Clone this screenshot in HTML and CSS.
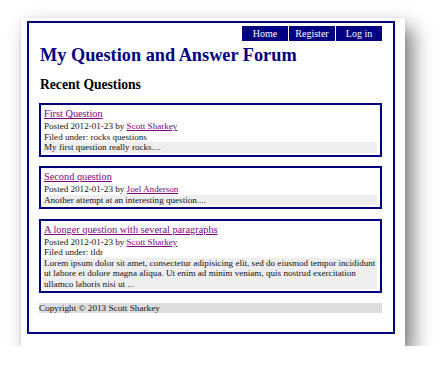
FILE: index.html
```html
<!DOCTYPE html>
<html lang="en">
<head>
  <meta charset="UTF-8">
  <title>My Question and Answer Forum</title>
  <link rel="stylesheet" href="styles.css">
</head>
<body>

  <!-- page sheet with shadow -->
  <div class="sheet">
    <div class="page">

      <!-- top navigation -->
      <ul class="nav">
        <li><a href="#">Home</a></li>
        <li><a href="#">Register</a></li>
        <li><a href="#">Log in</a></li>
      </ul>

      <h1>My Question and Answer Forum</h1>
      <h2>Recent Questions</h2>

      <div class="question">
        <a class="q-title" href="#">First Question</a>
        <div class="meta">Posted 2012-01-23 by <a href="#">Scott Sharkey</a></div>
        <div class="meta">Filed under: rocks questions</div>
        <div class="summary">My first question really rocks....</div>
      </div>

      <div class="question">
        <a class="q-title" href="#">Second question</a>
        <div class="meta">Posted 2012-01-23 by <a href="#">Joel Anderson</a></div>
        <div class="summary">Another attempt at an interesting question....</div>
      </div>

      <div class="question">
        <a class="q-title" href="#">A longer question with several paragraphs</a>
        <div class="meta">Posted 2012-01-23 by <a href="#">Scott Sharkey</a></div>
        <div class="meta">Filed under: tldr</div>
        <div class="summary">Lorem ipsum dolor sit amet, consectetur adipisicing elit, sed do eiusmod tempor incididunt ut labore et dolore magna aliqua. Ut enim ad minim veniam, quis nostrud exercitation ullamco laboris nisi ut ...</div>
      </div>

      <div class="footer">Copyright &copy; 2013 Scott Sharkey</div>

    </div>
  </div>

</body>
</html>
```

FILE: styles.css
```css
body {
  margin: 0;
  padding: 18px 0 0 21px;
  background-color: #fff;
  font-family: "Liberation Serif", "Times New Roman", serif;
  color: #111;
}

.sheet {
  width: 384px;
  height: 328px;
  box-sizing: border-box;
  padding: 3px 10px 12px 6px;
  background-color: #fff;
  box-shadow: 0 0 4px rgba(0,0,0,0.08), 8px 10px 18px rgba(0,0,0,0.5);
}

.page {
  height: 100%;
  box-sizing: border-box;
  border: 2px solid #000080;
  padding: 3px 11px 0 10px;
  display: flex;
  flex-direction: column;
}

.nav {
  list-style: none;
  margin: 0;
  padding: 0;
  display: flex;
  justify-content: flex-end;
}

.nav li {
  width: 46px;
  margin-left: 1px;
}

.nav a {
  display: block;
  height: 15px;
  line-height: 15px;
  background-color: #000080;
  color: #fff;
  text-align: center;
  text-decoration: none;
  font-size: 10px;
}

h1 {
  margin: 3px 0 0 1px;
  font-size: 18.3px;
  line-height: 22px;
  color: #000080;
}

h2 {
  margin: 10.6px 0 10.6px 1px;
  font-size: 13.6px;
  line-height: 16px;
  color: #000;
}

.question {
  border: 2px solid #000080;
  padding: 2px 3px 2px 2px;
  margin-bottom: 9.5px;
  font-size: 9.1px;
  line-height: 10.5px;
}

.question a {
  color: #800080;
}

.q-title {
  display: block;
  padding-left: 1px;
  font-size: 10.3px;
  line-height: 14px;
}

.meta {
  padding-left: 1px;
}

.summary {
  background-color: #eee;
  padding: 0 1px;
}

.footer {
  margin-top: 0.5px;
  background-color: #ddd;
  font-size: 9.2px;
  line-height: 10px;
}
```
